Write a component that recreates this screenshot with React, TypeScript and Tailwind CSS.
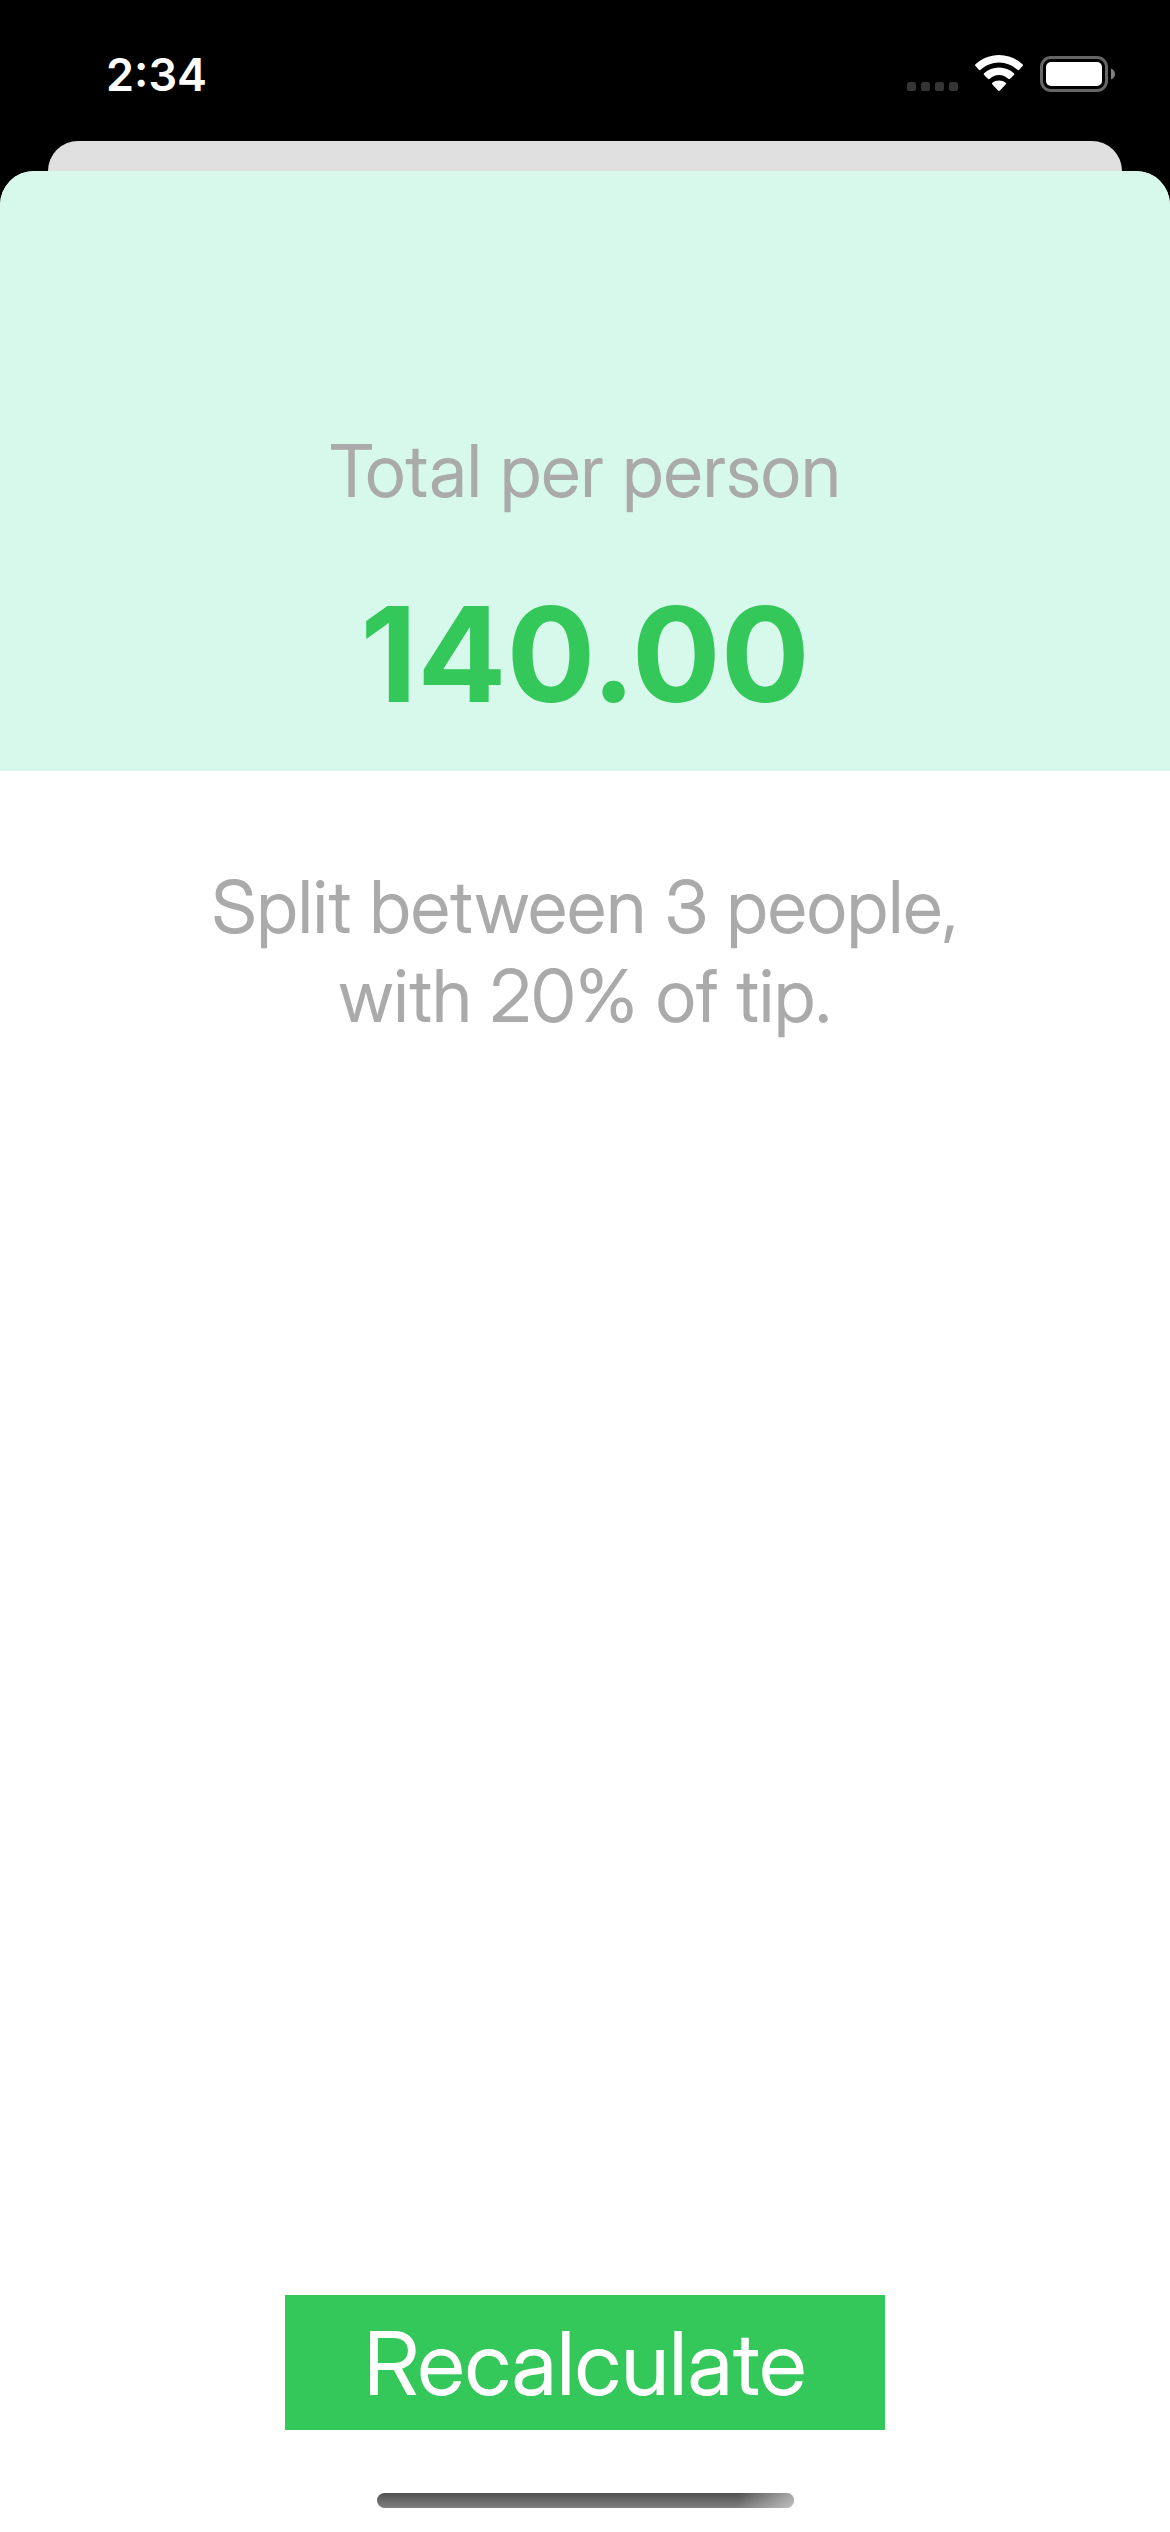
function StatusBar() {
  return (
    <header className="flex h-[141px] items-start justify-between pt-12 pr-[54px] pl-[106px] text-white">
      <time className="font-['Inter',sans-serif] text-[45px] leading-[54px] font-semibold">2:34</time>
      <div className="flex items-start gap-[17px] pt-[7px]">
        <svg className="mt-[27px] h-[9px] w-[51px]" viewBox="0 0 51 9" fill="#353535" aria-label="No cellular signal">
          <rect x="0" y="0" width="9" height="9" rx="2.6" />
          <rect x="14" y="0" width="9" height="9" rx="2.6" />
          <rect x="28" y="0" width="9" height="9" rx="2.6" />
          <rect x="42" y="0" width="9" height="9" rx="2.6" />
        </svg>
        <svg className="h-[37px] w-12" viewBox="0 0 48 37" fill="currentColor" aria-label="Wi-Fi">
          <path d="M24 0C33 0 41.300 3.500 47.500 9.300Q48.400 10.200 47.500 11.100L44.200 14.800Q43.300 15.700 42.400 14.800C37.500 10.200 31 7.400 24 7.400S10.500 10.200 5.600 14.800Q4.700 15.700 3.800 14.800L.5 11.100Q-.4 10.200.5 9.300C6.700 3.500 15 0 24 0Z" />
          <path d="M24 12.500C29.700 12.500 34.900 14.700 38.900 18.300Q39.900 19.200 38.900 20.100L35.100 23.700Q34.200 24.600 33.200 23.700C30.800 21.400 27.600 20 24 20S17.200 21.400 14.800 23.700Q13.800 24.600 12.900 23.700L9.100 20.100Q8.100 19.200 9.100 18.300C13.100 14.700 18.300 12.500 24 12.500Z" />
          <path d="M24 25.500C26.500 25.500 28.700 26.300 30.600 27.700Q31.500 28.500 30.600 29.400L24.900 35.500Q24 36.400 23.100 35.500L17.400 29.400Q16.500 28.500 17.400 27.700C19.300 26.300 21.500 25.500 24 25.500Z" />
        </svg>
        <svg className="mt-px h-9 w-[76px]" viewBox="0 0 76 36" aria-label="Battery full">
          <rect x="1.500" y="1.500" width="65" height="33" rx="9.500" fill="none" stroke="#666" strokeWidth="3" />
          <rect x="6" y="6" width="56" height="24" rx="5" fill="#fff" />
          <path d="M71 12.500C73.500 13.500 75 15.600 75 18S73.500 22.500 71 23.500Z" fill="#808080" />
        </svg>
      </div>
    </header>
  );
}

export default function App() {
  return (
    <div className="flex min-h-screen flex-col bg-black font-['Inter_Display','Inter',sans-serif]">
      <StatusBar />
      <div className="mx-12 h-[30px] rounded-t-[30px] bg-[#e0e0e0]" />
      <main className="flex flex-1 flex-col overflow-hidden rounded-t-[34px] bg-white text-center">
        <section className="flex h-[600px] flex-col items-center justify-end gap-[60px] bg-[#d7f9eb] pb-[39px]">
          <h1 className="text-[73px] leading-[90px] text-[#aaaaaa]">Total per person</h1>
          <p className="font-['Inter',sans-serif] text-[132px] leading-[156px] font-bold text-[#34c759]">140.00</p>
        </section>
        <p className="mx-auto mt-[91px] max-w-[900px] text-[73px] leading-[89px] text-[#aaaaaa]">
          Split between 3 people,
          <br />
          with 20% of tip.
        </p>
        <div className="mt-auto flex flex-col items-center gap-[63px] pb-6">
          <button
            type="button"
            className="h-[135px] w-[600px] bg-[#34c759] text-[88px] leading-[108px] text-white"
          >
            Recalculate
          </button>
          <div className="flex h-[15px] w-[417px] justify-end overflow-hidden rounded-full bg-linear-to-b from-[#505050] to-[#808080]">
            <div className="h-full w-14 bg-linear-to-r from-white/0 to-white/50" />
          </div>
        </div>
      </main>
    </div>
  );
}
